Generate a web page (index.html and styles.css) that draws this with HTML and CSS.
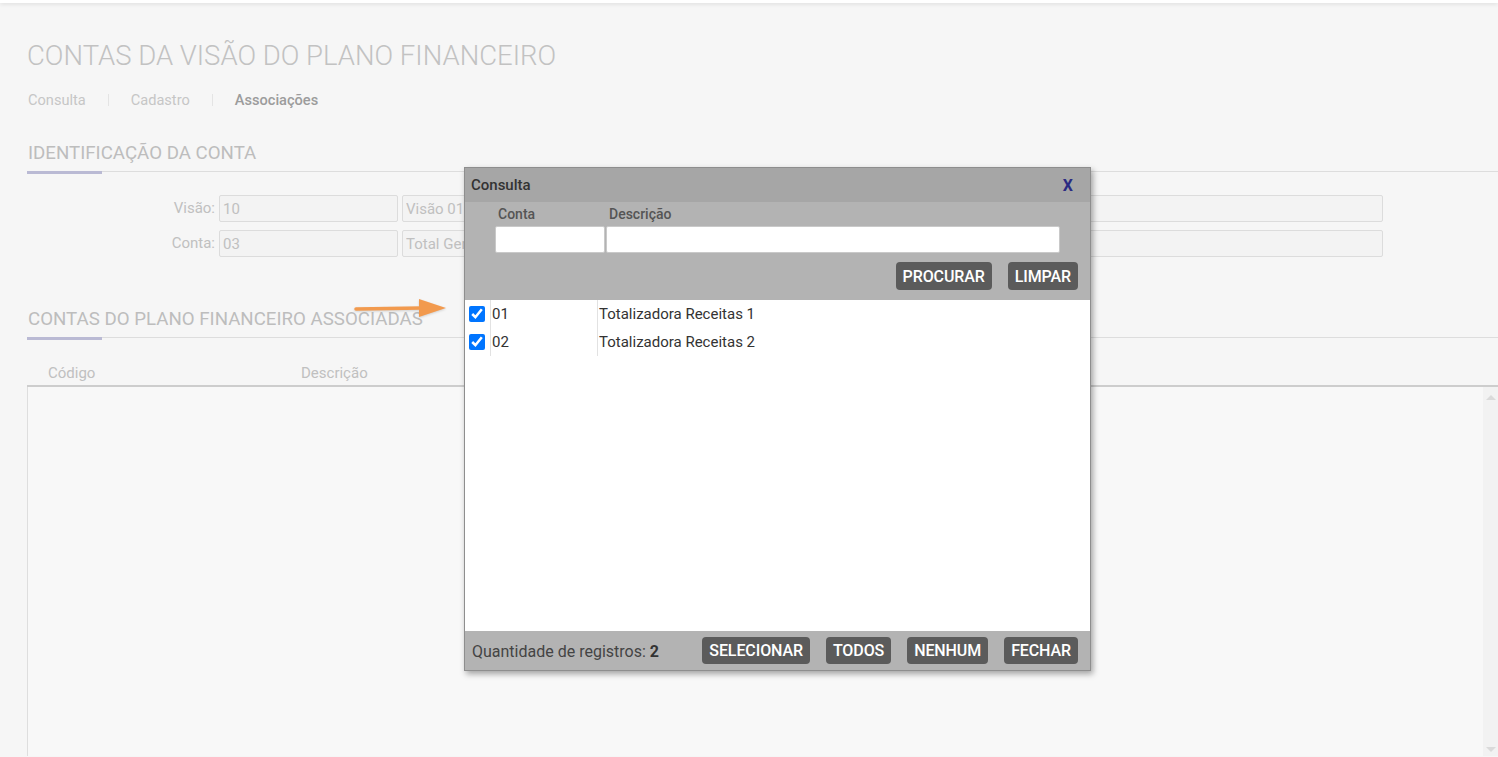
FILE: index.html
```html
<!DOCTYPE html>
<html lang="pt-BR">
<head>
  <meta charset="UTF-8" />
  <meta name="viewport" content="width=device-width, initial-scale=1.0"/>
  <title>Contas da Visão do Plano Financeiro</title>
  <link rel="stylesheet" href="styles.css">
</head>
<body>

  <div class="top-bar"></div>

  <div class="page">
    <h1 class="page-title">CONTAS DA VISÃO DO PLANO FINANCEIRO</h1>

    <div class="tabs">
      <a class="tab">Consulta</a>
      <span class="tab-sep"></span>
      <a class="tab">Cadastro</a>
      <span class="tab-sep"></span>
      <a class="tab active">Associações</a>
    </div>

    <div class="section">
      <div class="section-title">IDENTIFICAÇÃO DA CONTA</div>
      <div class="section-rule"></div>

      <div class="form-grid">
        <label>Visão:</label>
        <input type="text" value="10" readonly>
        <input type="text" value="Visão 01" readonly>

        <label>Conta:</label>
        <input type="text" value="03" readonly>
        <input type="text" value="Total Geral" readonly>
      </div>
    </div>

    <div class="section section-assoc">
      <div class="section-title">CONTAS DO PLANO FINANCEIRO ASSOCIADAS</div>
      <div class="section-rule"></div>

      <div class="grid-header">
        <span class="col-code">Código</span>
        <span class="col-desc">Descrição</span>
      </div>
      <div class="grid-body">
        <div class="grid-scroll">
          <span class="arrow-up"></span>
          <span class="arrow-down"></span>
        </div>
      </div>
    </div>
  </div>

  <!-- seta de destaque -->
  <svg class="hint-arrow" width="94" height="24" viewBox="0 0 94 24">
    <path d="M2 12 L68 11" stroke="#f29a4e" stroke-width="3.5" stroke-linecap="round" fill="none"/>
    <path d="M65 2 L92 11 L65 20 Z" fill="#f29a4e"/>
  </svg>

  <div class="modal">
    <div class="modal-header">
      <span>Consulta</span>
      <span class="modal-close">X</span>
    </div>

    <div class="modal-filter">
      <div class="filter-fields">
        <div class="field field-code">
          <label>Conta</label>
          <input type="text">
        </div>
        <div class="field field-desc">
          <label>Descrição</label>
          <input type="text">
        </div>
      </div>
      <div class="filter-actions">
        <button class="btn">PROCURAR</button>
        <button class="btn">LIMPAR</button>
      </div>
    </div>

    <div class="modal-list">
      <table>
        <tbody>
          <tr>
            <td class="cell-check"><input type="checkbox" checked></td>
            <td class="cell-code">01</td>
            <td class="cell-desc">Totalizadora Receitas 1</td>
          </tr>
          <tr>
            <td class="cell-check"><input type="checkbox" checked></td>
            <td class="cell-code">02</td>
            <td class="cell-desc">Totalizadora Receitas 2</td>
          </tr>
        </tbody>
      </table>
    </div>

    <div class="modal-footer">
      <span class="count">Quantidade de registros: <b>2</b></span>
      <div class="footer-actions">
        <button class="btn">SELECIONAR</button>
        <button class="btn">TODOS</button>
        <button class="btn">NENHUM</button>
        <button class="btn">FECHAR</button>
      </div>
    </div>
  </div>

</body>
</html>
```

FILE: styles.css
```css
html, body {
  height: 100%;
  overflow: hidden;
}

body {
  font-family: Roboto, 'Noto Sans', sans-serif;
  background: #f6f6f6;
  margin: 0;
  color: #333;
}

.top-bar {
  height: 3px;
  background: #fff;
  box-shadow: 0 1px 4px rgba(0, 0, 0, 0.12);
}

.page {
  padding-left: 27px;
}

.page-title {
  margin: 35px 0 0;
  font-size: 27.5px;
  font-weight: 300;
  line-height: 36px;
  color: #c2c2c2;
}

.tabs {
  display: flex;
  align-items: center;
  margin-top: 16px;
  height: 20px;
  padding-left: 1px;
}

.tab {
  font-size: 14.6px;
  line-height: 20px;
  color: #c6c6c6;
}

.tab.active {
  color: #9c9c9c;
  font-weight: 500;
}

.tab-sep {
  width: 1px;
  height: 12px;
  background: #e4e4e4;
  margin: 0 22px;
}

.section {
  margin-top: 31px;
}

.section-title {
  font-size: 18.7px;
  line-height: 24px;
  color: #bdbdbd;
  padding-left: 1px;
}

.section-rule {
  margin-top: 6px;
  height: 4px;
  background:
    linear-gradient(#babad4, #babad4) left top / 75px 3px no-repeat,
    linear-gradient(#dddddd, #dddddd) left top / 100% 1px no-repeat;
}

.form-grid {
  display: grid;
  grid-template-columns: 188px 179px 981px;
  column-gap: 4px;
  row-gap: 8px;
  margin-top: 20px;
}

.form-grid label {
  text-align: right;
  font-size: 15px;
  line-height: 27px;
  color: #c0c0c0;
}

.form-grid input {
  height: 27px;
  box-sizing: border-box;
  border: 1px solid #dcdcdc;
  border-radius: 2px;
  background: #f3f3f3;
  padding: 0 3px;
  font-family: Roboto, sans-serif;
  font-size: 15px;
  color: #c0c0c0;
  outline: none;
}

.section-assoc {
  margin-top: 50px;
}

.grid-header {
  display: flex;
  padding: 22px 0 2px;
  font-size: 15px;
  line-height: 20px;
  color: #c0c0c0;
  border-bottom: 2px solid #cdcdcd;
}

.col-code {
  padding-left: 21px;
  width: 253px;
}

.grid-body {
  height: 369px;
  border-left: 1px solid #dedede;
  background: #f8f8f8;
  display: flex;
  justify-content: flex-end;
}

.grid-scroll {
  width: 15px;
  background: #f2f2f2;
  display: flex;
  flex-direction: column;
  justify-content: space-between;
  align-items: center;
  padding: 8px 0 4px;
}

.arrow-up,
.arrow-down {
  width: 0;
  height: 0;
  border-left: 5px solid transparent;
  border-right: 5px solid transparent;
}

.arrow-up {
  border-bottom: 5px solid #dadada;
}

.arrow-down {
  border-top: 5px solid #dadada;
}

.hint-arrow {
  position: absolute;
  left: 354px;
  top: 297px;
  filter: drop-shadow(0 1px 1px rgba(0, 0, 0, 0.15));
}

/* modal */

.modal {
  position: absolute;
  left: 464px;
  top: 167px;
  width: 627px;
  height: 504px;
  box-sizing: border-box;
  border: 1px solid #8e8e8e;
  background: #b3b3b3;
  box-shadow: 2px 3px 6px rgba(0, 0, 0, 0.35);
  display: flex;
  flex-direction: column;
}

.modal-header {
  height: 34px;
  background: #a6a6a6;
  display: flex;
  justify-content: space-between;
  align-items: center;
  padding: 0 17px 0 6px;
  font-size: 15px;
  font-weight: 500;
  color: #333;
}

.modal-close {
  color: #2b2b82;
  font-weight: 700;
  font-size: 16px;
}

.modal-filter {
  height: 98px;
  box-sizing: border-box;
  padding: 3px 12px 10px 30px;
}

.filter-fields {
  display: flex;
  gap: 1px;
}

.field label {
  display: block;
  font-size: 14px;
  font-weight: 500;
  line-height: 18px;
  color: #555;
  padding-left: 3px;
  margin-bottom: 3px;
}

.field input {
  display: block;
  height: 27px;
  box-sizing: border-box;
  border: 1px solid #c9c9c9;
  border-radius: 2px;
  background: #fff;
  outline: none;
}

.field-code input {
  width: 110px;
}

.field-desc input {
  width: 454px;
}

.filter-actions {
  display: flex;
  justify-content: flex-end;
  gap: 16px;
  margin-top: 9px;
}

.btn {
  height: 28px;
  padding: 0 7px;
  border: none;
  border-radius: 4px;
  background: #5b5b5b;
  color: #fff;
  font-family: Roboto, sans-serif;
  font-size: 16px;
  font-weight: 500;
  letter-spacing: -0.1px;
  cursor: pointer;
}

.btn:hover {
  background: #444;
}

.modal-list {
  height: 331px;
  background: #fff;
}

.modal-list table {
  border-collapse: collapse;
}

.modal-list td {
  height: 27px;
  padding: 0 0 1px;
  font-size: 15px;
  color: #333;
  vertical-align: middle;
}

.cell-check {
  width: 25px;
  border-right: 1px solid #e2e2e2;
}

.cell-check input {
  width: 16px;
  height: 16px;
  margin: 0 0 0 4px;
  accent-color: #0075ff;
  display: block;
}

.cell-code {
  width: 105px;
  padding-left: 1px !important;
  border-right: 1px solid #e2e2e2;
}

.cell-desc {
  padding-left: 1px !important;
}

.modal-footer {
  flex: 1;
  display: flex;
  justify-content: space-between;
  align-items: flex-start;
  padding: 6px 12px 0 7px;
}

.count {
  font-size: 16px;
  line-height: 27px;
  color: #444;
  margin-top: 1px;
}

.count b {
  font-weight: 700;
  color: #333;
}

.footer-actions {
  display: flex;
  gap: 16px;
}

.footer-actions .btn {
  height: 27px;
}
```
